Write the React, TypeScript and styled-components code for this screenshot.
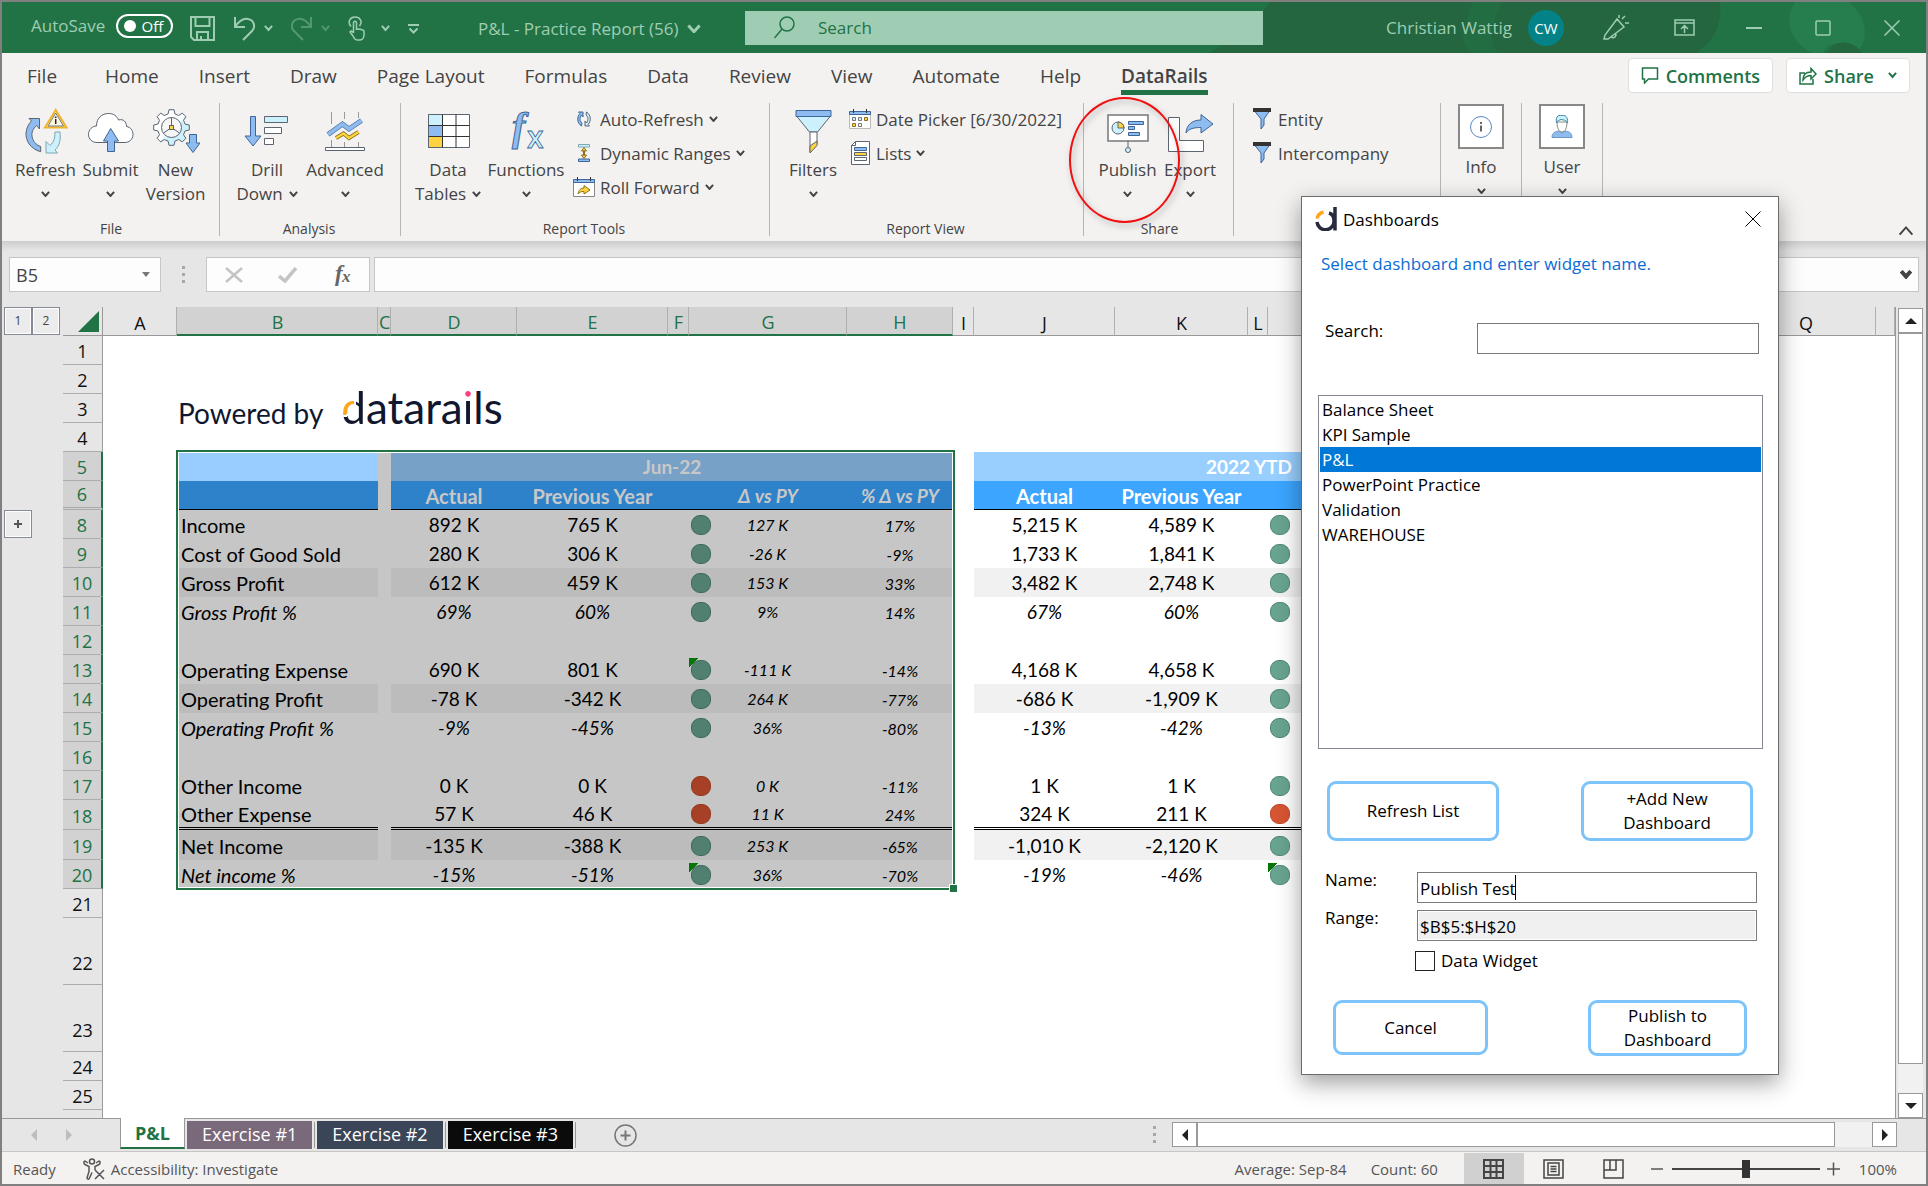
import React, { useState } from "react";
import styled, { createGlobalStyle, css } from "styled-components";

const GREEN = "#217346";
const MINT = "#9fcdb3";
const INK = "#444444";
const BLUE = "#8fbcf0";
const ICE = "#cdf0fd";
const GOLD = "#ffd23f";
const LINE = "#5b6470";
const UI = `"Open Sans", "Noto Sans", sans-serif`;
const CELL = `Lato, "Noto Sans", sans-serif`;

const Global = createGlobalStyle`
  *, *::before, *::after { box-sizing: border-box; }
  body { margin: 0; background: #e6e6e6; font-family: ${UI}; font-size: 17px; color: ${INK}; }
  button, input { font: inherit; color: inherit; margin: 0; }
  button { border: 0; background: none; padding: 0; }
  svg { display: block; flex: none; }
`;

const Frame = styled.div`
  position: relative;
  display: flex;
  flex-direction: column;
  min-height: 100vh;
  border: 2px solid #808080;
  overflow: hidden;
`;

/* ---------- title bar ---------- */

const TitleBar = styled.header`
  position: relative;
  display: flex;
  align-items: center;
  height: 51px;
  padding-left: 29px;
  background: ${GREEN};
  color: ${MINT};
`;
const TitleArt = styled.svg`
  position: absolute;
  right: 0;
  top: 0;
`;
const Quick = styled.div`
  position: relative;
  display: flex;
  align-items: center;
  flex: 0 0 447px;
  padding-bottom: 4px;
`;
const AutoSave = styled.label`
  display: flex;
  align-items: center;
  gap: 11px;
  margin-right: 17px;
`;
const Toggle = styled.button`
  display: flex;
  align-items: center;
  justify-content: space-between;
  width: 57px;
  height: 24px;
  padding: 0 8px 0 6px;
  border: 2px solid #fff;
  border-radius: 12px;
  color: #fff;
  font-size: 15px;
  line-height: 20px;
`;
const Knob = styled.span`
  width: 12px;
  height: 12px;
  border-radius: 6px;
  background: #fff;
`;
const QuickButton = styled.button<{ $dim?: boolean }>`
  display: flex;
  align-items: center;
  gap: 8px;
  margin-right: 18px;
  padding-top: 6px;
  opacity: ${(p) => (p.$dim ? 0.4 : 1)};
`;
const DocTitle = styled.button`
  position: relative;
  display: flex;
  align-items: center;
  gap: 8px;
  width: 267px;
  padding-top: 2px;
  white-space: nowrap;
`;
const SearchBox = styled.label`
  position: relative;
  display: flex;
  align-items: center;
  gap: 21px;
  flex: 0 1 518px;
  height: 34px;
  padding-left: 29px;
  background: ${MINT};
  color: ${GREEN};
`;
const SearchInput = styled.input`
  flex: 1;
  min-width: 0;
  border: 0;
  outline: 0;
  background: transparent;
  &::placeholder { color: ${GREEN}; opacity: 1; }
`;
const Account = styled.div`
  position: relative;
  display: flex;
  align-items: center;
  gap: 16px;
  margin-left: auto;
  margin-right: 17px;
  white-space: nowrap;
`;
const Avatar = styled.span`
  width: 36px;
  height: 36px;
  border-radius: 18px;
  background: #038387;
  color: #fff;
  font-size: 15px;
  line-height: 36px;
  text-align: center;
`;
const WindowButton = styled.button`
  position: relative;
  display: flex;
  align-items: center;
  justify-content: center;
  width: 69px;
  height: 51px;
`;

/* ---------- ribbon ---------- */

const TabRow = styled.nav`
  display: flex;
  align-items: center;
  gap: 40px;
  height: 44px;
  padding-left: 25px;
  padding-right: 16px;
  background: #f3f2f1;
`;
const Tab = styled.button<{ $active?: boolean }>`
  min-width: 38px;
  height: 44px;
  font-size: 19px;
  line-height: 24px;
  padding-top: 6px;
  padding-bottom: 4px;
  text-align: left;
  white-space: nowrap;
  ${(p) => p.$active && css`
    font-weight: 600;
    background: linear-gradient(${GREEN}, ${GREEN}) 0 37px / 100% 5px no-repeat;
  `}
`;
const TabActions = styled.div`
  display: flex;
  gap: 13px;
  margin-left: auto;
`;
const ActionButton = styled.button`
  display: flex;
  align-items: center;
  gap: 7px;
  height: 35px;
  padding: 0 12px;
  margin-top: 1px;
  border: 1px solid #e1dfdd;
  border-radius: 4px;
  background: #fff;
  color: ${GREEN};
  font-size: 18px;
  font-weight: 600;
`;
const Gap = styled.span<{ $w: number }>`
  flex: 0 0 ${(p) => p.$w}px;
`;
const Ribbon = styled.section`
  display: flex;
  align-items: stretch;
  height: 144px;
  padding: 6px 0 5px;
  background: #f3f2f1;
`;
const Group = styled.div<{ $w: number; $pad?: number }>`
  display: flex;
  flex-direction: column;
  flex: none;
  width: ${(p) => p.$w}px;
  padding-left: ${(p) => p.$pad ?? 8}px;
  border-right: 1px solid #b8b6b4;
`;
const GroupBody = styled.div`
  display: flex;
  flex: 1;
`;
const GroupLabel = styled.div`
  height: 14px;
  font-size: 14px;
  line-height: 14px;
  text-align: center;
  padding-right: 10px;
`;
const Big = styled.button<{ $w: number }>`
  display: flex;
  flex-direction: column;
  align-items: center;
  width: ${(p) => p.$w}px;
  line-height: 24px;
  white-space: nowrap;
`;
const BigIcon = styled.span`
  display: flex;
  align-items: center;
  justify-content: center;
  height: 55px;
`;
const BigLine = styled.span`
  display: flex;
  align-items: center;
  justify-content: center;
  gap: 6px;
  height: 24px;
`;
const SmallColumn = styled.div<{ $indent?: boolean }>`
  display: flex;
  flex-direction: column;
  margin-left: ${(p) => (p.$indent ? 8 : 1)}px;
`;
const Small = styled.button`
  display: flex;
  align-items: center;
  gap: 5px;
  height: 34px;
  padding-bottom: 2px;
  white-space: nowrap;
`;
const SmallIcon = styled.span`
  display: flex;
  justify-content: center;
  width: 22px;
`;
const Boxed = styled.span`
  display: flex;
  align-items: center;
  justify-content: center;
  width: 46px;
  height: 45px;
  margin: 1px 0 6px;
  border: 2px solid #8a8886;
  background: #fff;
`;
const Collapse = styled.button`
  margin: auto 12px 0 auto;
`;
const RedRing = styled.div`
  position: absolute;
  left: 1067px;
  top: 95px;
  width: 111px;
  height: 126px;
  border: 2px solid #f01010;
  border-radius: 50%;
  filter: drop-shadow(2px 3px 3px rgba(0, 0, 0, 0.3));
  pointer-events: none;
`;

/* ---------- formula bar ---------- */

const FormulaBar = styled.div`
  display: flex;
  height: 66px;
  padding: 16px 7px 15px;
  background: linear-gradient(#cdcdcd, #e6e6e6 10px);
`;
const FieldBox = styled.div<{ $w?: number }>`
  display: flex;
  align-items: center;
  justify-content: space-between;
  flex: ${(p) => (p.$w ? `0 0 ${p.$w}px` : "1")};
  height: 35px;
  border: 1px solid #c6c6c6;
  background: #fdfdfd;
`;
const NameInput = styled.input`
  width: 110px;
  padding: 1px 6px 0;
  border: 0;
  background: transparent;
  font-size: 18px;
`;
const FormulaInput = styled.input`
  flex: 1;
  border: 0;
  background: transparent;
`;
const DropButton = styled.button`
  padding: 0 6px 0 10px;
`;
const Dots = styled.span<{ $w: number }>`
  display: flex;
  flex-direction: column;
  align-items: center;
  justify-content: center;
  gap: 4px;
  width: ${(p) => p.$w}px;
  &::before, &::after, i { content: ""; width: 3px; height: 3px; background: #a8a8a8; }
`;
const FormulaButtons = styled.div`
  display: grid;
  grid-template-columns: repeat(3, 54px);
  justify-items: center;
  align-items: center;
  flex: 0 0 164px;
  height: 35px;
  margin-right: 4px;
  border: 1px solid #c6c6c6;
  background: #fdfdfd;
`;

/* ---------- sheet ---------- */

const SheetArea = styled.main`
  display: flex;
  flex: 1 1 811px;
  background: #e6e6e6;
`;
const Outline = styled.div`
  flex: 0 0 61px;
  padding: 0 0 0 2px;
`;
const Levels = styled.div`
  display: flex;
  margin-bottom: 175px;
`;
const LevelButton = styled.button`
  width: 28px;
  height: 28px;
  border: 1px solid #848a94;
  box-shadow: inset 0 0 0 1px #fff;
  background: #ececec;
  font-size: 12px;
  line-height: 26px;
  text-align: center;
`;
const Sheet = styled.div`
  position: relative;
  flex: 1;
  min-width: 0;
  border-right: 1px solid #999;
  background: linear-gradient(to right, #e6e6e6 39px, #999 39px, #999 40px, #fff 40px);
`;
const Table = styled.table`
  width: 100%;
  table-layout: fixed;
  border-collapse: separate;
  border-spacing: 0;
  color: #000;
`;
const Col = styled.col<{ $w?: number }>`
  width: ${(p) => (p.$w ? `${p.$w}px` : "auto")};
`;
const ColHead = styled.th<{ $on?: boolean }>`
  height: 29px;
  padding: 3px 0 0 1px;
  border-right: 1px solid #b0b0b0;
  border-bottom: ${(p) => (p.$on ? `2px solid ${GREEN}` : "1px solid #999")};
  background: ${(p) => (p.$on ? "#d2d2d2" : "#e6e6e6")};
  color: ${(p) => (p.$on ? GREEN : "#111")};
  font-size: 18px;
  font-weight: 400;
  line-height: 24px;
`;
const Corner = styled.th`
  height: 29px;
  padding: 0;
  border-right: 1px solid #999;
  border-bottom: 1px solid #999;
  background: #e6e6e6;
  svg { margin: 1px 0 0 15px; }
`;
const RowHead = styled.th<{ $h: number; $on?: boolean; $fold?: boolean }>`
  height: ${(p) => p.$h}px;
  padding: 0 0 ${(p) => (p.$h > 40 ? 8 : 0)}px;
  border-right: ${(p) => (p.$on ? `2px solid ${GREEN}` : "1px solid #999")};
  border-bottom: ${(p) => (p.$fold ? "3px double #aaa" : "1px solid #adadad")};
  background: ${(p) => (p.$on ? "#d2d2d2" : "#e6e6e6")};
  color: ${(p) => (p.$on ? GREEN : "#111")};
  font-size: 18px;
  font-weight: 400;
  line-height: 25px;
  vertical-align: bottom;
`;
type Tone = "plain" | "sel" | "selAlt" | "alt" | "top" | "topSel" | "active" | "head" | "headSel";
const tones: Record<Tone, string> = {
  plain: "transparent",
  sel: "#c6c6c6",
  selAlt: "#bcbcbc",
  alt: "#f1f1f1",
  top: "#99cfff",
  topSel: "#77a1c7",
  active: "#99cdff",
  head: "#3ba5ff",
  headSel: "#2e82c9",
};
type Size = "label" | "value" | "minor";
const sizes: Record<Size, number> = { label: 20, value: 19, minor: 16 };
const Cell = styled.td<{ $tone?: Tone; $rule?: "thin" | "double"; $left?: boolean; $it?: boolean; $size?: Size; $low?: boolean; $bold?: boolean; $light?: "white" | "gray" }>`
  height: 29px;
  padding: ${(p) => (p.$left ? "1px 0 0 4px" : p.$low ? "3px 0 0" : "1px 0 0")};
  background: ${(p) => tones[p.$tone ?? "plain"]};
  border-bottom: ${(p) => (p.$rule === "thin" ? "1px solid #000" : p.$rule === "double" ? "3px double #000" : "0")};
  color: ${(p) => (p.$light === "white" ? "#fff" : p.$light === "gray" ? "#c8c8c8" : "#000")};
  font-family: ${CELL};
  font-size: ${(p) => sizes[p.$size ?? "value"]}px;
  font-style: ${(p) => (p.$it ? "italic" : "normal")};
  font-weight: ${(p) => (p.$bold ? 700 : 400)};
  line-height: 24px;
  text-align: ${(p) => (p.$left ? "left" : "center")};
  white-space: nowrap;
`;
const Delta = styled.div<{ $flag?: boolean }>`
  display: flex;
  align-items: center;
  height: 25px;
  padding-left: 2px;
  background: ${(p) => (p.$flag ? "linear-gradient(135deg, #067506 7px, transparent 7px)" : "none")};
`;
const Dot = styled.span<{ $red?: boolean; $dim?: boolean }>`
  width: 20px;
  height: 20px;
  border-radius: 9px;
  border: 1px solid ${(p) => (p.$red ? (p.$dim ? "#95391f" : "#bd4a2a") : p.$dim ? "#3f6a5b" : "#4f8a75")};
  background: ${(p) => (p.$red ? (p.$dim ? "#a64027" : "#d65532") : p.$dim ? "#517f70" : "#68a48f")};
`;
const DeltaText = styled.span`
  flex: 1;
  margin-right: 23px;
`;
const Powered = styled.div`
  display: flex;
  align-items: baseline;
  gap: 18px;
  padding-top: 3px;
  font-family: ${CELL};
  font-size: 28px;
  line-height: 44px;
  color: #10172f;
`;
const Wordmark = styled.span`
  font-size: 44px;
`;
const Tinted = styled.span<{ $paint: string }>`
  background: ${(p) => p.$paint};
  background-clip: text;
  -webkit-background-clip: text;
  color: transparent;
`;
const Selection = styled.div`
  position: absolute;
  left: 113px;
  top: 143px;
  width: 779px;
  height: 440px;
  border: 2px solid ${GREEN};
  box-shadow: inset 0 0 0 1px #fff;
  pointer-events: none;
  &::after {
    content: "";
    position: absolute;
    right: -4px;
    bottom: -4px;
    width: 8px;
    height: 8px;
    border: solid #fff;
    border-width: 1px 0 0 1px;
    background: ${GREEN};
  }
`;
const VScroll = styled.div`
  display: flex;
  flex-direction: column;
  flex: 0 0 30px;
  padding: 1px 3px 0 2px;
`;
const ScrollButton = styled.button`
  display: flex;
  align-items: center;
  justify-content: center;
  flex: 0 0 25px;
  min-height: 25px;
  border: 1px solid #999;
  background: #fff;
`;
const Thumb = styled.div<{ $grow: number }>`
  flex: ${(p) => p.$grow};
  border: 1px solid #999;
  background: #fff;
`;
const Track = styled.div<{ $grow: number }>`
  flex: ${(p) => p.$grow};
  background: #f1f1f1;
`;

/* ---------- sheet tabs and status ---------- */

const BottomBar = styled.div`
  display: flex;
  height: 33px;
  background: #e6e6e6;
`;
const SheetTabs = styled.div`
  display: flex;
  flex: 1;
  border-top: 1px solid #999;
`;
const TabNav = styled.div`
  display: flex;
  align-items: center;
  gap: 23px;
  width: 118px;
  padding-left: 26px;
`;
const SheetTab = styled.button<{ $bg?: string }>`
  height: 28px;
  margin: 2px 2px 0 0;
  padding: 0 15px 3px;
  background: ${(p) => p.$bg};
  color: #fff;
  font-size: 18px;
  line-height: 24px;
`;
const TabRule = styled.span`
  width: 1px;
  height: 26px;
  margin: 3px 2px 0 0;
  background: #999;
`;
const ActiveTab = styled.button`
  height: 31px;
  margin: -1px 2px 0 0;
  padding: 0 14px;
  border: solid #999;
  border-width: 0 1px;
  border-bottom: 2px solid ${GREEN};
  background: #fff;
  color: ${GREEN};
  font-size: 18px;
  font-weight: 700;
`;
const AddTab = styled.button`
  margin-left: 36px;
`;
const HScroll = styled.div`
  display: flex;
  flex: 0 0 790px;
  padding: 3px 29px 4px 0;
  border-top: 1px solid #999;
`;
const Status = styled.footer`
  display: flex;
  align-items: center;
  height: 33px;
  padding: 1px 29px 0 11px;
  border-top: 1px solid #c8c6c4;
  background: #f3f2f1;
  color: #555;
  font-size: 15px;
  white-space: nowrap;
`;
const StatusItem = styled.span<{ $gap: number }>`
  display: flex;
  align-items: center;
  gap: 6px;
  margin-right: ${(p) => p.$gap}px;
`;
const Spacer = styled.span`
  flex: 1;
`;
const ViewButton = styled.button<{ $on?: boolean }>`
  display: flex;
  align-items: center;
  justify-content: center;
  width: 60px;
  height: 32px;
  background: ${(p) => (p.$on ? "#d0d0d0" : "transparent")};
`;
const Zoom = styled.input`
  appearance: none;
  width: 148px;
  height: 20px;
  margin: 0 7px 0 9px;
  background: linear-gradient(#444, #444) center / 100% 2px no-repeat;
  &::-webkit-slider-thumb { appearance: none; width: 8px; height: 18px; background: #333; }
`;

/* ---------- dialog ---------- */

const Dialog = styled.section`
  position: absolute;
  right: 147px;
  top: 194px;
  width: 478px;
  height: 879px;
  border: 1px solid #6b6b6b;
  background: #fff;
  box-shadow: 0 8px 22px rgba(0, 0, 0, 0.38);
  color: #000;
  line-height: 24px;
`;
const DialogHead = styled.div`
  display: flex;
  align-items: center;
  gap: 6px;
  height: 44px;
  padding: 0 17px 0 13px;
`;
const DialogTitle = styled.h2`
  flex: 1;
  margin: 0;
  padding-top: 2px;
  font-size: 17px;
  font-weight: 400;
`;
const Hint = styled.p`
  margin: 11px 19px 43px;
  color: #0a6cd6;
`;
const FieldRow = styled.div<{ $end: number }>`
  display: flex;
  justify-content: space-between;
  padding: 0 ${(p) => p.$end}px 0 23px;
`;
const TextInput = styled.input<{ $w: number }>`
  width: ${(p) => p.$w}px;
  height: 31px;
  margin-top: 4px;
  padding: 2px 2px 0;
  border: 1px solid #7a7a7a;
  outline: 0;
  background: #fff;
  &:read-only { background: #f0f0f0; box-shadow: inset 0 0 0 1px #fff; }
`;
const CaretHost = styled.span`
  position: relative;
`;
const Caret = styled.span`
  position: absolute;
  left: 98px;
  top: 7px;
  width: 1px;
  height: 25px;
  background: #000;
`;
const List = styled.ul`
  height: 354px;
  margin: 41px 15px 32px 16px;
  padding: 1px;
  border: 1px solid #828790;
  list-style: none;
`;
const Option = styled.li<{ $on: boolean }>`
  height: 25px;
  padding: 1px 2px 0;
  background: ${(p) => (p.$on ? "#0078d7" : "transparent")};
  color: ${(p) => (p.$on ? "#fff" : "#000")};
`;
const ButtonRow = styled.div<{ $pad: number; $below: number }>`
  display: flex;
  justify-content: space-between;
  padding: 0 ${(p) => p.$pad}px;
  margin-bottom: ${(p) => p.$below}px;
`;
const Pill = styled.button<{ $w: number; $h: number }>`
  width: ${(p) => p.$w}px;
  height: ${(p) => p.$h}px;
  padding: 0 20px;
  border: 3px solid #7cc4fa;
  border-radius: 9px;
  background: #fff;
  line-height: 24px;
`;
const Fields = styled.div`
  display: grid;
  gap: 3px;
`;
const CheckLabel = styled.label`
  display: flex;
  align-items: center;
  gap: 6px;
  height: 24px;
  margin: 8px 0 27px 113px;
`;
const Check = styled.input`
  appearance: none;
  width: 20px;
  height: 20px;
  border: 1px solid #222;
  background: #fff;
`;

/* ---------- drawings ---------- */

const Chevron = ({ w = 9, t = 2, up = false }: { w?: number; t?: number; up?: boolean }) => (
  <svg width={w} height={w * 0.7} viewBox="0 0 10 7" fill="none" stroke="currentColor" strokeWidth={(t * 10) / w}>
    <path d={up ? "M1 6 5 1.500 9 6" : "M1 1 5 5.500 9 1"} />
  </svg>
);
const Tri = ({ d, c = "#222" }: { d: "u" | "d" | "l" | "r"; c?: string }) => {
  const p = { u: "M0 9 6 3l6 6z", d: "M0 3l6 6 6-6z", l: "M9 0 3 6l6 6z", r: "M3 0l6 6-6 6z" }[d];
  return <svg width="12" height="12" viewBox="0 0 12 12"><path d={p} fill={c} /></svg>;
};
const ic = (w: number, h: number, children: React.ReactNode) => (
  <svg width={w} height={h} viewBox={`0 0 ${w} ${h}`} fill="none" stroke={LINE} strokeWidth="1">{children}</svg>
);
const RefreshIcon = () => ic(44, 46, <>
  <path fill={BLUE} d="M16.700 43.700C6 41 1.500 32 2 25c.5-5 2.500-9 5.500-12L5 10.500h10.500V21l-3-3.500C9 21 7.500 24 8 28c.5 5 4 9 8.700 10.500z" />
  <path fill="#fff8e0" stroke="#f0b429" strokeWidth="2" d="M31.700 2 21 19.500h21.500z" />
  <path d="M31.700 5 24 18h15.500z" stroke="#777" />
  <path d="M31.700 11v5M31.700 8.500v1.500" stroke="#222" strokeWidth="1.500" />
  <path fill={ICE} stroke="#7fa6b5" d="M31 24h5c1 9-1 14-5 18l2.500 3H22V33.500l4 4c4-3.500 5-7.500 5-13.500z" />
</>);
const CloudIcon = () => ic(46, 46, <>
  <path fill="#fff" d="M9 34.500C4 34.500.5 31 .5 26.500c0-5 4-8.500 8-8.500C8.500 10 14 5.500 20.500 5.500c5 0 8.500 2.500 10 6.500 5-1.500 8 2 8 6.500 4 .5 6.500 4 6.500 8 0 5-4 8-8 8z" />
  <path fill={BLUE} stroke="#3d6595" d="M22.700 20.500 30.500 33h-4v10.500h-7V33h-4z" />
</>);
const GearIcon = () => {
  const teeth = Array.from({ length: 8 }, (_, i) => {
    const at = (r: number, deg: number) => {
      const a = ((i * 45 + deg) * Math.PI) / 180;
      return `${(19.5 + r * Math.sin(a)).toFixed(1)} ${(19.5 - r * Math.cos(a)).toFixed(1)}`;
    };
    return `${at(14, -14)}L${at(18, -8)}L${at(18, 8)}L${at(14, 14)}`;
  });
  return ic(48, 46, <>
    <linearGradient id="gear" x1="0" y1="0" x2="1" y2="1"><stop offset=".5" stopColor="#fff" /><stop offset=".6" stopColor={ICE} /></linearGradient>
    <path fill="url(#gear)" d={`M${teeth.join("L")}Z`} />
    <circle cx="19.500" cy="19.500" r="10" fill="#f7f7f7" />
    <path d="M19.500 19.500V9.500M19.500 19.500l-8 5.500M19.500 19.500l8 5.500" />
    <rect x="17.500" y="17.500" width="4" height="4" fill={GOLD} />
    <path fill={BLUE} stroke="#3d6595" d="M37.500 26.500h7v8.500H48l-7 9.500-7-9.500h3.500z" />
  </>);
};
const DrillIcon = () => ic(46, 46, <>
  <path fill={BLUE} stroke="#3d6595" d="M6.500 8.500h5V28h5.500L9 38 1 28h5.500z" />
  <path fill={ICE} d="M20.500 8.500h23v6h-23z" /><path fill="#fff" d="M20.500 19.500h17v6h-17zM20.500 30.500h9v6h-9z" />
</>);
const AdvancedIcon = () => ic(43, 46, <>
  <path stroke="#999" d="M7.500 4v12M20.500 4v7M34.500 4v6M7.500 32v7M20.500 34v5M34.500 34v5" />
  <path stroke="#4a6f9f" strokeWidth="5" d="m4 26.500 14.500-10.500 6.500 5 12.500-8.500" /><path stroke={BLUE} strokeWidth="3.500" d="m4 26.500 14.500-10.500 6.500 5 12.500-8.500" />
  <path stroke="#8a7020" strokeWidth="4" d="m12 30 7.500-4.500 5.500 4.500 9.500-6" /><path stroke={GOLD} strokeWidth="2.500" d="m12 30 7.500-4.500 5.500 4.500 9.500-6" />
  <path fill="#fff" d="M1.500 39.500h39v3h-39z" />
</>);
const GridIcon = () => ic(44, 46, <>
  <path fill="#fff" d="M2.500 6.500h41v33h-41z" /><path fill={ICE} d="M2.500 6.500h14v11h-14z" /><path fill={BLUE} d="M2.500 17.500h14v11h-14z" /><path fill={GOLD} d="M2.500 28.500h14v11h-14z" />
  <path stroke="#333" d="M16.500 6.500v33M30 6.500v33M2.500 17.500h41M2.500 28.500h41" />
</>);
const FunctionsIcon = () => (
  <svg width="50" height="54" viewBox="0 0 50 54" fontFamily="Liberation Serif" stroke="#3d6595">
    <text x="11" y="36" fontSize="40" fontStyle="italic" fontWeight="700" fill={BLUE}>f</text>
    <text x="26" y="44" fontSize="30" fontFamily="Open Sans" fontWeight="600" fill={ICE} strokeWidth=".8">x</text>
  </svg>
);
const FunnelIcon = () => ic(37, 46, <>
  <path fill={ICE} d="M1.500 8 14.500 24h8L35.500 8z" /><path fill={BLUE} stroke="#3d6595" d="M1 2.500h35v6H1z" />
  <path fill="#fff" d="M15 24h7v12l-7 8z" /><path fill={GOLD} d="M15 38l7-5v4.500L15 45z" />
</>);
const PublishIcon = () => ic(42, 46, <>
  <path fill="#fff" stroke="#777" strokeWidth="1.500" d="M1 7h40v26H1z" /><path d="M21 33v6" /><circle cx="21" cy="42" r="2.500" fill={ICE} />
  <circle cx="11" cy="20" r="6" fill={ICE} /><path fill={GOLD} d="M11 20v-6a6 6 0 0 1 6 6z" />
  <path fill={BLUE} stroke="#3d6595" d="M21.500 13.500h15v3h-15zM21.500 18.500h6v3h-6zM21.500 24.500h11v3h-11z" />
</>);
const ExportIcon = () => ic(47, 46, <>
  <path fill="#fff" d="M1.500 9.500h11v23h24v11h-35z" />
  <path fill={BLUE} stroke="#3d6595" d="M19 25c.5-8 6-13 15-13V6.500L46 16 34 25v-5.500c-7 0-12 1-15 5.500z" />
</>);
const AutoRefreshIcon = () => ic(16, 18, <>
  <path fill={BLUE} stroke="#3d6595" d="M5.500 16C1 13 .5 7 4 3.500L2.500 2H7v5L5.500 5c-2 3-2 6 .5 8z" /><path fill={ICE} d="M10.500 2c4.500 3 5 9 1.500 12.500l1.500 1.500H9v-5l1.500 2c2-3 2-6-.5-8z" />
</>);
const RangesIcon = () => ic(12, 20, <>
  <path fill={ICE} stroke="#7fa6b5" d="M.5 1.500h11v2.500H.5z" /><path fill={BLUE} stroke="#3d6595" d="M.5 16h11v2.500H.5z" /><path fill={GOLD} stroke="#8a7020" d="m6 4.500 2.500 3.500h-5zM6 15.500 3.500 12h5zM5.500 8h1v4h-1z" />
</>);
const RollIcon = () => ic(22, 20, <>
  <path fill="#fff" stroke="#888" d="M.5 4.500h21v15H.5z" /><path fill={BLUE} stroke="#3d6595" d="M.5 2.500h21v3H.5z" /><path stroke="#333" d="M4.500 0v4M17.500 0v4" />
  <path fill={GOLD} stroke="#8a7020" d="M5 17c.5-4 3-6 6-6V8.500l6 4.500-6 4v-2.500c-3 0-4.500.5-6 2.500z" />
</>);
const CalendarIcon = () => ic(22, 20, <>
  <path fill="#fff" stroke="#bbb" d="M.5 4.500h21v15H.5z" /><path fill={BLUE} stroke="#3d6595" d="M.5 2.500h21v3H.5z" /><path stroke="#333" d="M4.500 0v4M17.500 0v4" />
  <path fill={ICE} stroke="#777" d="M3.500 8.500h3v3h-3zM9.500 8.500h3v3h-3z" /><path fill={GOLD} stroke="#8a7020" d="M15.500 8.500h3v3h-3zM3.500 14.500h3v3h-3z" /><path stroke="#777" d="M9.500 14.500h3v3h-3z" />
</>);
const ListsIcon = () => ic(19, 24, <>
  <path fill="#fff" d="M4.500.5h14v23H.5V4.500z" /><path fill={BLUE} stroke="#3d6595" d="M3.500 6.500h12v3h-12z" /><path fill={GOLD} d="M3.500 11.500h12v3h-12z" /><path d="M3.500 16.500h12v3h-12zM.5 4.500h4v-4" />
</>);
const EntityIcon = () => ic(18, 22, <>
  <path fill={BLUE} stroke="#3d6595" d="M1.500 3h15L11 11v6l-3 4V11z" /><path fill="#333" stroke="none" d="M0 0h18v4H0z" />
</>);
const InfoIcon = () => ic(24, 24, <>
  <circle cx="12" cy="12" r="10.500" stroke="#5d88c2" /><path stroke="#333" strokeWidth="1.500" d="M12 10.500v6M12 7v2" />
</>);
const UserIcon = () => ic(22, 24, <>
  <path fill={BLUE} stroke="#6d95c5" d="M1 22.500c0-5 3.500-6 7-6.500l3 2 3-2c3.500.5 7 1.500 7 6.500z" /><path fill="#fff" stroke="#888" d="M6 7c0 6 2 10 5 10s5-4 5-10z" /><path fill={ICE} stroke="#3d8aa5" d="M5.500 8C4 0 9 0 11 .5c5-1 6 4 5.500 7.500-1-3-4-3-6.500-3.500-2 1-4 1-4.500 3.500z" />
</>);
const DLogo = () => (
  <svg width="22" height="24" viewBox="0 0 22 24" fill="none" strokeWidth="3.500">
    <path stroke="#262b40" d="M20 0v23.500M2 15a8.500 8.500 0 0 0 17-1.500c0-3.500-2-6.500-5-7.500" /><path stroke="#ffa41c" d="M2 11.500c.5-3 3-5.500 6.500-6.500" />
  </svg>
);

/* ---------- data ---------- */

type Row = { n: number; label?: string; it?: boolean; alt?: boolean; rule?: "double"; sel?: string[]; ytd?: string[]; red?: boolean; redY?: boolean; flag?: boolean; flagY?: boolean };
const rows: Row[] = [
  { n: 8, label: "Income", sel: ["892 K", "765 K", "127 K", "17%"], ytd: ["5,215 K", "4,589 K"] },
  { n: 9, label: "Cost of Good Sold", sel: ["280 K", "306 K", "-26 K", "-9%"], ytd: ["1,733 K", "1,841 K"] },
  { n: 10, label: "Gross Profit", alt: true, sel: ["612 K", "459 K", "153 K", "33%"], ytd: ["3,482 K", "2,748 K"] },
  { n: 11, label: "Gross Profit %", it: true, sel: ["69%", "60%", "9%", "14%"], ytd: ["67%", "60%"] },
  { n: 12 },
  { n: 13, label: "Operating Expense", flag: true, sel: ["690 K", "801 K", "-111 K", "-14%"], ytd: ["4,168 K", "4,658 K"] },
  { n: 14, label: "Operating Profit", alt: true, sel: ["-78 K", "-342 K", "264 K", "-77%"], ytd: ["-686 K", "-1,909 K"] },
  { n: 15, label: "Operating Profit %", it: true, sel: ["-9%", "-45%", "36%", "-80%"], ytd: ["-13%", "-42%"] },
  { n: 16 },
  { n: 17, label: "Other Income", red: true, sel: ["0 K", "0 K", "0 K", "-11%"], ytd: ["1 K", "1 K"] },
  { n: 18, label: "Other Expense", red: true, redY: true, rule: "double", sel: ["57 K", "46 K", "11 K", "24%"], ytd: ["324 K", "211 K"] },
  { n: 19, label: "Net Income", alt: true, sel: ["-135 K", "-388 K", "253 K", "-65%"], ytd: ["-1,010 K", "-2,120 K"] },
  { n: 20, label: "Net income %", it: true, flag: true, flagY: true, sel: ["-15%", "-51%", "36%", "-70%"], ytd: ["-19%", "-46%"] },
];
const columns: [string, number?][] = [
  ["A", 74], ["B", 201], ["C", 13], ["D", 126], ["E", 151], ["F", 21], ["G", 158], ["H", 106], ["I", 21],
  ["J", 141], ["K", 133], ["L", 20], ["", 152], ["", 104], ["", 26], ["", 186], ["Q", 140], [""],
];
const dashboards = ["Balance Sheet", "KPI Sample", "P&L", "PowerPoint Practice", "Validation", "WAREHOUSE"];
const tabs = ["File", "Home", "Insert", "Draw", "Page Layout", "Formulas", "Data", "Review", "View", "Automate", "Help", "DataRails"];

const BigButton = ({ w, icon, a, b, drop }: { w: number; icon: React.ReactNode; a: string; b?: string; drop?: boolean }) => (
  <Big $w={w}>
    <BigIcon>{icon}</BigIcon>
    <BigLine>{a}</BigLine>
    <BigLine>{b}{drop && <Chevron />}</BigLine>
  </Big>
);
const SmallButton = ({ icon, text, drop }: { icon: React.ReactNode; text: string; drop?: boolean }) => (
  <Small><SmallIcon>{icon}</SmallIcon>{text}{drop && <Chevron />}</Small>
);

function DataRow({ r }: { r: Row }) {
  const base: Tone = r.alt ? "selAlt" : "sel";
  const right: Tone = r.alt ? "alt" : "plain";
  const s = r.sel ?? ["", "", "", ""];
  const y = r.ytd ?? ["", ""];
  return (
    <tr>
      <RowHead $on $h={r.n === 18 || r.n === 19 ? 30 : 29}>{r.n}</RowHead>
      <Cell />
      <Cell $tone={base} $left $it={r.it} $size="label" $rule={r.rule}>{r.label}</Cell>
      <Cell $tone="sel" />
      <Cell $tone={base} $it={r.it} $rule={r.rule}>{s[0]}</Cell>
      <Cell $tone={base} $it={r.it} $rule={r.rule}>{s[1]}</Cell>
      <Cell $tone={base} $rule={r.rule} />
      <Cell $tone={base} $it $size="minor" $rule={r.rule}>
        {r.sel && <Delta $flag={r.flag}><Dot $dim $red={r.red} /><DeltaText>{s[2]}</DeltaText></Delta>}
      </Cell>
      <Cell $tone={base} $it $size="minor" $low $rule={r.rule}>{s[3]}</Cell>
      <Cell />
      <Cell $tone={right} $it={r.it} $rule={r.rule}>{y[0]}</Cell>
      <Cell $tone={right} $it={r.it} $rule={r.rule}>{y[1]}</Cell>
      <Cell $tone={right} $rule={r.rule} />
      <Cell $tone={right} $rule={r.rule}>
        {r.ytd && <Delta $flag={r.flagY}><Dot $red={r.redY} /></Delta>}
      </Cell>
      <Cell $tone={right} $rule={r.rule} />
      <Cell colSpan={4} />
    </tr>
  );
}

const EmptyRow = ({ n, h = 29 }: { n: number; h?: number }) => (
  <tr><RowHead $h={h}>{n}</RowHead><Cell colSpan={18} /></tr>
);

function Dashboards() {
  const [picked, setPicked] = useState("P&L");
  const [name, setName] = useState("Publish Test");
  return (
    <Dialog role="dialog" aria-labelledby="dlg">
      <DialogHead>
        <DLogo />
        <DialogTitle id="dlg">Dashboards</DialogTitle>
        <button aria-label="Close">
          <svg width="16" height="16" stroke="#000" fill="none"><path d="m.5.5 15 15M15.500.5l-15 15" /></svg>
        </button>
      </DialogHead>
      <Hint>Select dashboard and enter widget name.</Hint>
      <FieldRow $end={19}>
        <label htmlFor="find">Search:</label>
        <TextInput id="find" $w={282} />
      </FieldRow>
      <List role="listbox" aria-label="Dashboards">
        {dashboards.map((d) => (
          <Option key={d} role="option" aria-selected={d === picked} $on={d === picked} onClick={() => setPicked(d)}>{d}</Option>
        ))}
      </List>
      <ButtonRow $pad={25} $below={27}>
        <Pill $w={172} $h={60}>Refresh List</Pill>
        <Pill $w={172} $h={60}>+Add New Dashboard</Pill>
      </ButtonRow>
      <Fields>
        <FieldRow $end={21}>
          <label htmlFor="name">Name:</label>
          <CaretHost>
            <TextInput id="name" $w={340} value={name} onChange={(e) => setName(e.target.value)} />
            <Caret />
          </CaretHost>
        </FieldRow>
        <FieldRow $end={21}>
          <label htmlFor="range">Range:</label>
          <TextInput id="range" $w={340} readOnly value="$B$5:$H$20" />
        </FieldRow>
      </Fields>
      <CheckLabel><Check type="checkbox" />Data Widget</CheckLabel>
      <ButtonRow $pad={31} $below={0}>
        <Pill $w={155} $h={55}>Cancel</Pill>
        <Pill $w={159} $h={56}>Publish to Dashboard</Pill>
      </ButtonRow>
    </Dialog>
  );
}

export default function App() {
  return (
    <Frame>
      <Global />
      <TitleBar>
        <TitleArt width="716" height="51" viewBox="0 0 716 51">
          <path fill="#23663f" d="M60 0h450c2 20-4 36-18 46l-6 5H0C10 42 40 30 60 0z" />
          <path fill="#217346" d="M262 51c-18-12-4-30 0-51h30c-10 20-14 40-4 51z" opacity=".5" />
          <path fill="#267d4d" d="M585 0c-14 22 0 44 18 51h10c4-12 24-14 32 0 16-12 12-36-6-51z" />
          <path fill="#23663f" d="M618 51c4-14 26-14 34 0z" />
        </TitleArt>
        <Quick>
          <AutoSave>AutoSave<Toggle role="switch" aria-checked="false"><Knob />Off</Toggle></AutoSave>
          <QuickButton aria-label="Save">
            <svg width="25" height="25" viewBox="0 0 25 25" fill="none" stroke="currentColor" strokeWidth="2"><path d="M1 1h23v23H4l-3-3zM5.500 1v9h14V1M7 24v-8h11v8M11 20v4" /></svg>
          </QuickButton>
          <QuickButton aria-label="Undo">
            <svg width="23" height="25" viewBox="0 0 23 25" fill="none" stroke="currentColor" strokeWidth="2"><path d="M2 1v10h10M2 11C6 5 10 2 15 3c6 1 8 8 4 12l-9 9" /></svg>
            <Chevron />
          </QuickButton>
          <QuickButton aria-label="Redo" $dim>
            <svg width="22" height="25" viewBox="1 0 22 25" fill="none" stroke="currentColor" strokeWidth="2"><path d="M21 1v10H11M21 11C17 5 13 2 8 3c-6 1-8 8-4 12l9 9" /></svg>
            <Chevron />
          </QuickButton>
          <QuickButton aria-label="Touch mode">
            <svg width="17" height="25" viewBox="1 0 17 25" fill="none" stroke="currentColor" strokeWidth="1.500"><path d="M6.500 17V7c0-2.500 3-2.500 3 0v7c0-1.500 2.500-1.500 2.500 0 0-1.500 2.500-1.500 2.500.5 0-1 2.500-1 2.500 1V19c0 3-2 5-4.500 5h-2c-3 0-3.500-2-4.500-4l-3-4c1-1.500 2.500-1 3.500 1M4 10.500C0 6 3 1 8 1s8 4.500 4.500 9" /></svg>
            <Gap $w={0} /><Chevron />
          </QuickButton>
          <QuickButton aria-label="Customize toolbar">
            <svg width="11" height="10" viewBox="0 0 11 10" fill="none" stroke="currentColor" strokeWidth="2"><path d="M0 1h11M1.500 4.500l4 4 4-4" /></svg>
          </QuickButton>
        </Quick>
        <DocTitle>P&amp;L - Practice Report (56)<Chevron w={14} t={3} /></DocTitle>
        <SearchBox>
          <svg width="21" height="23" viewBox="0 0 21 23" fill="none" stroke="currentColor" strokeWidth="1.500"><circle cx="13" cy="8" r="7" /><path d="m8 13-7.500 9" /></svg>
          <SearchInput placeholder="Search" aria-label="Search" />
        </SearchBox>
        <Account>Christian Wattig<Avatar>CW</Avatar></Account>
        <WindowButton aria-label="What's new">
          <svg width="26" height="26" viewBox="0 0 26 26" fill="none" stroke="currentColor" strokeWidth="1.500"><path d="M14 4 2 20l-1 4h4L21 12zM8 21c1 3 5 2 5-2M16 3V0M19 4l3-3M22 8h4" /></svg>
        </WindowButton>
        <WindowButton aria-label="Ribbon display options">
          <svg width="21" height="17" viewBox="0 0 21 17" fill="none" stroke="currentColor" strokeWidth="1.500"><path d="M1 1h19v15H1zM1 4h19M10.500 14V7M7 10l3.500-3.500L14 10" /></svg>
        </WindowButton>
        <WindowButton aria-label="Minimize"><svg width="16" height="2" fill="currentColor"><path d="M0 0h16v2H0z" /></svg></WindowButton>
        <WindowButton aria-label="Restore"><svg width="16" height="16" fill="none" stroke="currentColor" strokeWidth="1.500"><rect x="1" y="1" width="14" height="14" rx="1" /></svg></WindowButton>
        <WindowButton aria-label="Close window"><svg width="16" height="16" fill="none" stroke="currentColor" strokeWidth="1.500"><path d="m.5.5 15 15M15.500.5l-15 15" /></svg></WindowButton>
      </TitleBar>

      <TabRow>
        {tabs.map((t) => <Tab key={t} $active={t === "DataRails"}>{t}</Tab>)}
        <TabActions>
          <ActionButton>
            <svg width="18" height="17" viewBox="0 0 17 17" fill="none" stroke="currentColor" strokeWidth="1.500"><path d="M1 1h15v11H7l-4 4v-4H1z" /></svg>
            Comments
          </ActionButton>
          <ActionButton>
            <svg width="18" height="18" viewBox="0 0 18 18" fill="none" stroke="currentColor" strokeWidth="1.500"><path d="M6 6H1v11h13v-5M4 13c0-5 3-8 8-8V1.500L17 7l-5 5V8.500C8 8.500 6 10 4 13z" /></svg>
            Share<Gap $w={0} /><Chevron />
          </ActionButton>
        </TabActions>
      </TabRow>

      <Ribbon>
        <Group $w={218} $pad={11}>
          <GroupBody>
            <BigButton w={65} icon={<RefreshIcon />} a="Refresh" drop />
            <BigButton w={65} icon={<CloudIcon />} a="Submit" drop />
            <BigButton w={65} icon={<GearIcon />} a="New" b="Version" />
          </GroupBody>
          <GroupLabel>File</GroupLabel>
        </Group>
        <Group $w={181}>
          <GroupBody>
            <BigButton w={78} icon={<DrillIcon />} a="Drill" b="Down" drop />
            <BigButton w={78} icon={<AdvancedIcon />} a="Advanced" drop />
          </GroupBody>
          <GroupLabel>Analysis</GroupLabel>
        </Group>
        <Group $w={369}>
          <GroupBody>
            <BigButton w={78} icon={<GridIcon />} a="Data" b="Tables" drop />
            <BigButton w={78} icon={<FunctionsIcon />} a="Functions" drop />
            <SmallColumn $indent>
              <SmallButton icon={<AutoRefreshIcon />} text="Auto-Refresh" drop />
              <SmallButton icon={<RangesIcon />} text="Dynamic Ranges" drop />
              <SmallButton icon={<RollIcon />} text="Roll Forward" drop />
            </SmallColumn>
          </GroupBody>
          <GroupLabel>Report Tools</GroupLabel>
        </Group>
        <Group $w={314}>
          <GroupBody>
            <BigButton w={70} icon={<FunnelIcon />} a="Filters" drop />
            <SmallColumn>
              <SmallButton icon={<CalendarIcon />} text="Date Picker [6/30/2022]" />
              <SmallButton icon={<ListsIcon />} text="Lists" drop />
            </SmallColumn>
          </GroupBody>
          <GroupLabel>Report View</GroupLabel>
        </Group>
        <Group $w={150} $pad={12}>
          <GroupBody>
            <BigButton w={63} icon={<PublishIcon />} a="Publish" drop />
            <BigButton w={62} icon={<ExportIcon />} a="Export" drop />
          </GroupBody>
          <GroupLabel>Share</GroupLabel>
        </Group>
        <Group $w={207} $pad={16}>
          <SmallColumn>
            <SmallButton icon={<EntityIcon />} text="Entity" />
            <SmallButton icon={<EntityIcon />} text="Intercompany" />
          </SmallColumn>
        </Group>
        <Group $w={81} $pad={0}>
          <Big $w={80}><Boxed><InfoIcon /></Boxed><BigLine>Info</BigLine><BigLine><Chevron /></BigLine></Big>
        </Group>
        <Group $w={81} $pad={0}>
          <Big $w={80}><Boxed><UserIcon /></Boxed><BigLine>User</BigLine><BigLine><Chevron /></BigLine></Big>
        </Group>
        <Collapse aria-label="Collapse ribbon"><Chevron w={16} up /></Collapse>
      </Ribbon>

      <FormulaBar>
        <FieldBox $w={152}>
          <NameInput defaultValue="B5" aria-label="Name box" />
          <DropButton aria-label="Choose name"><svg width="12" height="5"><path d="M0 0h8L4 5z" fill="#777" /></svg></DropButton>
        </FieldBox>
        <Dots $w={45}><i /></Dots>
        <FormulaButtons>
          <button aria-label="Cancel entry"><svg width="18" height="16" stroke="#c4c4c4" strokeWidth="2.500"><path d="m1 1 16 14M17 1 1 15" /></svg></button>
          <button aria-label="Enter"><svg width="20" height="16" fill="none" stroke="#c4c4c4" strokeWidth="3.500"><path d="m1 9 6 5L18 1" /></svg></button>
          <button aria-label="Insert function"><svg width="28" height="32" fill="#666" fontFamily="Liberation Serif" fontStyle="italic" fontWeight="700"><text x="7" y="22" fontSize="23">f</text><text x="14" y="23" fontSize="17">x</text></svg></button>
        </FormulaButtons>
        <FieldBox>
          <FormulaInput aria-label="Formula" />
          <DropButton aria-label="Expand formula bar"><Chevron w={12} t={4} /></DropButton>
        </FieldBox>
      </FormulaBar>

      <SheetArea>
        <Outline>
          <Levels><LevelButton>1</LevelButton><LevelButton>2</LevelButton></Levels>
          <LevelButton aria-label="Expand">
            <svg width="26" height="26" stroke="#555" strokeWidth="2"><path d="M9 13h8M13 9v8" /></svg>
          </LevelButton>
        </Outline>
        <Sheet>
          <Table>
            <colgroup><Col $w={40} />{columns.map(([, w], i) => <Col key={i} $w={w} />)}</colgroup>
            <thead>
              <tr>
                <Corner><svg width="21" height="21"><path d="M21 0v21H0z" fill={GREEN} /></svg></Corner>
                {columns.map(([c], i) => <ColHead key={i} $on={c >= "B" && c <= "H"}>{c}</ColHead>)}
              </tr>
            </thead>
            <tbody>
              <EmptyRow n={1} />
              <tr>
                <RowHead $h={29}>2</RowHead>
                <Cell />
                <td rowSpan={3} colSpan={17}>
                  <Powered>
                    Powered by
                    <Wordmark>
                      <Tinted $paint="radial-gradient(circle at 2px 23px, #ffa41c 11px, #fff 11px, #fff 13px, #10172f 13px)">d</Tinted>
                      atara
                      <Tinted $paint="linear-gradient(#ff3d7f 19px, #10172f 19px)">i</Tinted>
                      ls
                    </Wordmark>
                  </Powered>
                </td>
              </tr>
              <tr><RowHead $h={29}>3</RowHead><Cell /></tr>
              <tr><RowHead $h={29}>4</RowHead><Cell /></tr>
              <tr>
                <RowHead $on $h={29}>5</RowHead>
                <Cell />
                <Cell $tone="active" />
                <Cell $tone="sel" />
                <Cell $tone="topSel" $bold $light="gray" colSpan={5}>Jun-22</Cell>
                <Cell />
                <Cell $tone="top" $bold $light="white" colSpan={5}>2022 YTD</Cell>
                <Cell colSpan={4} />
              </tr>
              <tr>
                <RowHead $on $fold $h={29}>6</RowHead>
                <Cell />
                <Cell $tone="headSel" $rule="thin" />
                <Cell $tone="sel" />
                <Cell $tone="headSel" $rule="thin" $bold $size="label" $light="gray">Actual</Cell>
                <Cell $tone="headSel" $rule="thin" $bold $size="label" $light="gray">Previous Year</Cell>
                <Cell $tone="headSel" $rule="thin" />
                <Cell $tone="headSel" $rule="thin" $bold $it $light="gray">Δ vs PY</Cell>
                <Cell $tone="headSel" $rule="thin" $bold $it $light="gray">% Δ vs PY</Cell>
                <Cell />
                <Cell $tone="head" $rule="thin" $bold $size="label" $light="white">Actual</Cell>
                <Cell $tone="head" $rule="thin" $bold $size="label" $light="white">Previous Year</Cell>
                <Cell $tone="head" $rule="thin" colSpan={3} />
                <Cell colSpan={4} />
              </tr>
              {rows.map((r) => <DataRow key={r.n} r={r} />)}
              <EmptyRow n={21} />
              <EmptyRow n={22} h={67} />
              <EmptyRow n={23} h={67} />
              <EmptyRow n={24} />
              <EmptyRow n={25} />
            </tbody>
          </Table>
          <Selection />
        </Sheet>
        <VScroll>
          <ScrollButton aria-label="Scroll up"><Tri d="u" /></ScrollButton>
          <Thumb $grow={732} />
          <Track $grow={29} />
          <ScrollButton aria-label="Scroll down"><Tri d="d" /></ScrollButton>
        </VScroll>
      </SheetArea>

      <BottomBar>
        <SheetTabs>
          <TabNav><Tri d="l" c="#bdbdbd" /><Tri d="r" c="#bdbdbd" /></TabNav>
          <ActiveTab>P&amp;L</ActiveTab>
          <SheetTab $bg="#7a697b">Exercise #1</SheetTab><TabRule />
          <SheetTab $bg="#3b4558">Exercise #2</SheetTab><TabRule />
          <SheetTab $bg="#0b0b0b">Exercise #3</SheetTab><TabRule />
          <AddTab aria-label="New sheet">
            <svg width="23" height="23" fill="none" stroke="#777" strokeWidth="1.500"><circle cx="11.500" cy="11.500" r="10.500" /><path d="M6.500 11.500h10M11.500 6.500v10" strokeWidth="2" /></svg>
          </AddTab>
        </SheetTabs>
        <HScroll>
          <Dots $w={36}><i /></Dots>
          <ScrollButton aria-label="Scroll left"><Tri d="l" /></ScrollButton>
          <Thumb $grow={637} />
          <Track $grow={37} />
          <ScrollButton aria-label="Scroll right"><Tri d="r" /></ScrollButton>
        </HScroll>
      </BottomBar>

      <Status>
        <StatusItem $gap={27}>Ready</StatusItem>
        <StatusItem $gap={0}>
          <svg width="22" height="22" viewBox="0 0 22 22" fill="none" stroke="#555" strokeWidth="1.500"><circle cx="9" cy="3.500" r="2.500" /><path d="M5 5 2 3C0 4 1 6 2 6.500L6 8.500v5L4 20c.5 1.500 2 1.500 2.500 0L9 14.500M13 5l3-2c2 1 1 3 0 3.500L12 8.500V12M12 12l9 9M21 12l-9 9" /></svg>
          Accessibility: Investigate
        </StatusItem>
        <Spacer />
        <StatusItem $gap={24}>Average: Sep-84</StatusItem>
        <StatusItem $gap={26}>Count: 60</StatusItem>
        <ViewButton $on aria-label="Normal view"><svg width="21" height="20" fill="none" stroke="#444" strokeWidth="2"><path d="M1 1h19v18H1zM7.500 1v18M13.500 1v18M1 7h19M1 13h19" /></svg></ViewButton>
        <ViewButton aria-label="Page layout view"><svg width="21" height="20" fill="none" stroke="#444" strokeWidth="1.500"><path d="M1 1h19v18H1zM5 4h11v12H5zM7.500 7.500h6M7.500 10h6M7.500 12.500h6" /></svg></ViewButton>
        <ViewButton aria-label="Page break view"><svg width="21" height="20" fill="none" stroke="#444" strokeWidth="1.500"><path d="M1 1h19v18H1zM1 11h12V1M7 1v10" /></svg></ViewButton>
        <Gap $w={7} />
        <button aria-label="Zoom out"><svg width="12" height="14" stroke="#555" strokeWidth="1.500"><path d="M0 7h12" /></svg></button>
        <Zoom type="range" aria-label="Zoom" defaultValue={50} />
        <button aria-label="Zoom in"><svg width="13" height="14" stroke="#555" strokeWidth="1.500"><path d="M0 7h13M6.500 .5v13" /></svg></button>
        <Gap $w={19} />
        <span>100%</span>
      </Status>

      <RedRing />
      <Dashboards />
    </Frame>
  );
}
